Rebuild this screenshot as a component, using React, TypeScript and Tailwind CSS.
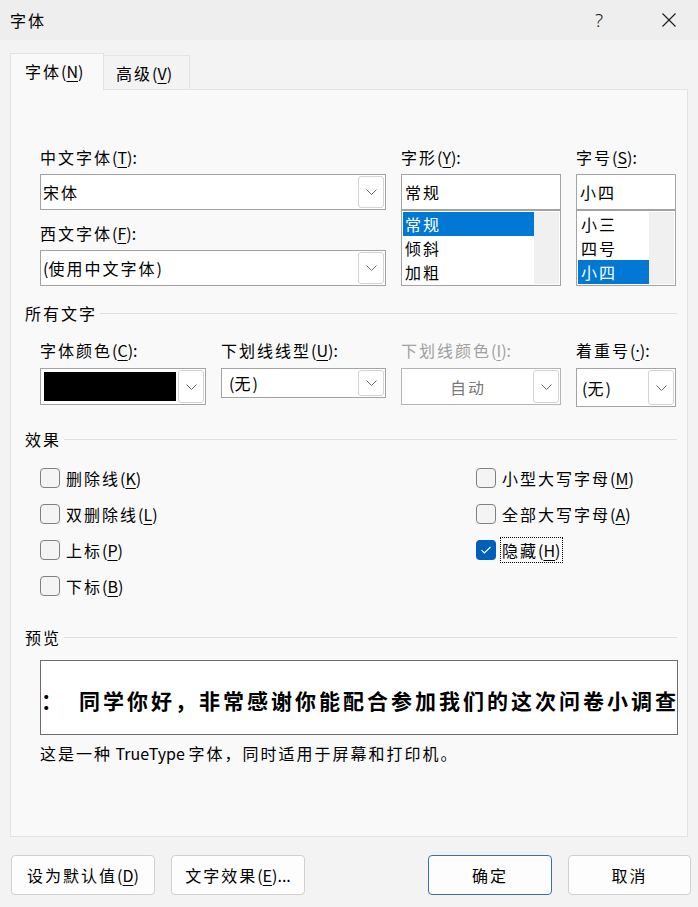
import React from "react";

const CJK = /[\u2E80-\u9FFF\uFF00-\uFFEF\u3000-\u303F]/;

function L({ s, uClass }: { s: string; uClass?: string }) {
  const out: React.ReactNode[] = [];
  let key = 0;
  let buf = "";
  let bufCjk: boolean | null = null;
  const flush = () => {
    if (buf) {
      out.push(
        <span key={key++} className={bufCjk ? "tracking-[2px]" : "tracking-normal"}>
          {buf}
        </span>
      );
      buf = "";
    }
  };
  let i = 0;
  while (i < s.length) {
    const ch = s[i];
    if (ch === "&") {
      flush();
      bufCjk = null;
      out.push(
        <span key={key++} className={"underline decoration-1 underline-offset-[3px] tracking-normal " + (uClass || "")}>
          {s[i + 1]}
        </span>
      );
      i += 2;
      continue;
    }
    const c = CJK.test(ch);
    if (bufCjk !== null && c !== bufCjk) flush();
    bufCjk = c;
    buf += ch;
    i++;
  }
  flush();
  return <>{out}</>;
}

const Chevron = () => (
  <svg width="11" height="6" viewBox="0 0 11 6" fill="none">
    <path d="M0.5 0.5L5.5 5.5L10.5 0.5" stroke="#6b6b6b" strokeWidth="1" />
  </svg>
);

function DropBtn() {
  return (
    <div className="w-[26px] shrink-0 self-stretch rounded-[3px] border border-[#d4d4d4] bg-white flex items-center justify-center">
      <Chevron />
    </div>
  );
}

function Section({ title }: { title: string }) {
  return (
    <div className="flex items-center h-[20px]">
      <span className="whitespace-nowrap">
        <L s={title} />
      </span>
      <div className="flex-1 h-px bg-[#e0e0e0] ml-[3px]" />
    </div>
  );
}

function Check({ label, checked, focus }: { label: string; checked?: boolean; focus?: boolean }) {
  return (
    <div className="h-[36px] flex items-center">
      {checked ? (
        <div className="w-[20px] h-[20px] rounded-[4px] bg-[#005fb8] flex items-center justify-center">
          <svg width="12" height="10" viewBox="0 0 12 10" fill="none">
            <path d="M1.5 5.2L4.4 8L10.5 2" stroke="white" strokeWidth="1.1" />
          </svg>
        </div>
      ) : (
        <div className="w-[20px] h-[20px] rounded-[4px] border border-[#7f7f7f] bg-[#f4f4f4]" />
      )}
      {focus ? (
        <span className="ml-[4px] h-[26px] flex items-center px-[1px] border border-dotted border-black whitespace-nowrap">
          <L s={label} />
        </span>
      ) : (
        <span className="ml-[6px] whitespace-nowrap">
          <L s={label} />
        </span>
      )}
    </div>
  );
}

function Btn({ s, className }: { s: string; className: string }) {
  return (
    <div className={"h-[40px] rounded-[4px] border bg-[#fdfdfd] flex items-center justify-center whitespace-nowrap " + className}>
      <L s={s} />
    </div>
  );
}

export default function App() {
  return (
    <div className="w-[698px] h-[907px] bg-[#f3f3f3] flex flex-col overflow-hidden text-black font-['Noto_Sans_CJK_SC','Noto_Sans',sans-serif] text-[16px] leading-[20px]">
      {/* title bar */}
      <div className="h-[40px] bg-[#eeeeee] flex items-center pl-[10px] pr-[6px] shrink-0">
        <span className="flex-1">
          <L s="字体" />
        </span>
        <div className="w-[46px] flex items-center justify-center text-[19px] font-light font-['Noto_Sans',sans-serif] text-[#1a1a1a]">?</div>
        <div className="ml-[24px] w-[46px] flex items-center justify-center">
          <svg width="14" height="14" viewBox="0 0 14 14" fill="none">
            <path d="M0.5 0.5L13.5 13.5M13.5 0.5L0.5 13.5" stroke="#1a1a1a" strokeWidth="1.1" />
          </svg>
        </div>
      </div>

      {/* tabs */}
      <div className="mt-[13px] h-[37px] flex items-end pl-[10px] relative z-10 shrink-0">
        <div className="w-[94px] h-[37px] border border-b-0 border-[#e3e3e3] bg-[#f9f9f9] flex items-center pl-[14px] pb-[2px] whitespace-nowrap">
          <L s="字体(&N)" />
        </div>
        <div className="w-[86px] h-[35px] border border-l-0 border-[#e3e3e3] bg-[#f3f3f3] flex items-center pl-[12px] whitespace-nowrap">
          <L s="高级(&V)" />
        </div>
      </div>

      {/* panel */}
      <div className="-mt-[1px] mx-[10px] h-[748px] shrink-0 border border-[#e3e3e3] bg-[#f9f9f9] pl-[14px] pr-[10px] flex flex-col">
        {/* row 1 */}
        <div className="mt-[57px] pl-[15px] grid grid-cols-[166px_165px_160px_100px] gap-x-[15px]">
          <div className="col-span-2 flex flex-col">
            <div className="h-[20px]">
              <L s="中文字体(&T):" />
            </div>
            <div className="mt-[7px] h-[36px] border border-[#a3a3a3] bg-white p-[1px] flex items-center">
              <span className="flex-1 pl-[1px]">
                <L s="宋体" />
              </span>
              <DropBtn />
            </div>
            <div className="mt-[13px] h-[20px]">
              <L s="西文字体(&F):" />
            </div>
            <div className="mt-[7px] h-[36px] border border-[#a3a3a3] bg-white p-[1px] flex items-center">
              <span className="flex-1 pl-[1px]">
                <L s="(使用中文字体)" />
              </span>
              <DropBtn />
            </div>
          </div>
          <div className="flex flex-col">
            <div className="h-[20px]">
              <L s="字形(&Y):" />
            </div>
            <div className="mt-[7px] h-[36px] border border-[#a3a3a3] bg-white flex items-center pl-[3px]">
              <L s="常规" />
            </div>
            <div className="h-[76px] border border-[#a3a3a3] bg-white p-[1px] flex">
              <div className="flex-1 flex flex-col">
                <div className="h-[24px] bg-[#0078d4] text-white flex items-center pl-[2px]">
                  <L s="常规" />
                </div>
                <div className="h-[24px] flex items-center pl-[2px]">
                  <L s="倾斜" />
                </div>
                <div className="h-[24px] flex items-center pl-[2px]">
                  <L s="加粗" />
                </div>
              </div>
              <div className="w-[25px] bg-[#f0f0f0]" />
            </div>
          </div>
          <div className="flex flex-col">
            <div className="h-[20px]">
              <L s="字号(&S):" />
            </div>
            <div className="mt-[7px] h-[36px] border border-[#a3a3a3] bg-white flex items-center pl-[3px]">
              <L s="小四" />
            </div>
            <div className="h-[76px] border border-[#a3a3a3] bg-white p-[1px] flex">
              <div className="flex-1 flex flex-col">
                <div className="h-[24px] flex items-center pl-[3px]">
                  <L s="小三" />
                </div>
                <div className="h-[24px] flex items-center pl-[3px]">
                  <L s="四号" />
                </div>
                <div className="h-[24px] bg-[#0078d4] text-white flex items-center pl-[3px]">
                  <L s="小四" />
                </div>
              </div>
              <div className="w-[25px] bg-[#f0f0f0]" />
            </div>
          </div>
        </div>

        {/* 所有文字 */}
        <div className="mt-[17px]">
          <Section title="所有文字" />
        </div>
        <div className="mt-[17px] pl-[15px] grid grid-cols-[166px_165px_160px_100px] gap-x-[15px] items-start">
          <div className="flex flex-col">
            <div className="h-[20px] whitespace-nowrap">
              <L s="字体颜色(&C):" />
            </div>
            <div className="mt-[8px] h-[37px] border border-[#a3a3a3] bg-white p-[1px] flex">
              <div className="flex-1 my-[2px] ml-[2px] mr-[2px] bg-black" />
              <DropBtn />
            </div>
          </div>
          <div className="flex flex-col">
            <div className="h-[20px] whitespace-nowrap">
              <L s="下划线线型(&U):" />
            </div>
            <div className="mt-[8px] h-[30px] border border-[#a3a3a3] bg-white p-[1px] flex items-center">
              <span className="flex-1 pl-[6px]">
                <L s="(无)" />
              </span>
              <DropBtn />
            </div>
          </div>
          <div className="flex flex-col">
            <div className="h-[20px] whitespace-nowrap text-[#a0a0a0]">
              <L s="下划线颜色(&I):" />
            </div>
            <div className="mt-[8px] h-[37px] border border-[#b4b4b4] bg-white p-[1px] flex items-center">
              <span className="flex-1 text-center text-[#7a7a7a]">
                <L s="自动" />
              </span>
              <DropBtn />
            </div>
          </div>
          <div className="flex flex-col">
            <div className="h-[20px] whitespace-nowrap">
              <L s="着重号(&·):" uClass="font-['Noto_Sans',sans-serif]" />
            </div>
            <div className="mt-[8px] h-[39px] border border-[#a3a3a3] bg-white p-[1px] flex items-center">
              <span className="flex-1 pl-[4px]">
                <L s="(无)" />
              </span>
              <DropBtn />
            </div>
          </div>
        </div>

        {/* 效果 */}
        <div className="mt-[22px]">
          <Section title="效果" />
        </div>
        <div className="mt-[11px] pl-[15px] grid grid-cols-[436px_1fr]">
          <div className="flex flex-col">
            <Check label="删除线(&K)" />
            <Check label="双删除线(&L)" />
            <Check label="上标(&P)" />
            <Check label="下标(&B)" />
          </div>
          <div className="flex flex-col">
            <Check label="小型大写字母(&M)" />
            <Check label="全部大写字母(&A)" />
            <Check label="隐藏(&H)" checked focus />
          </div>
        </div>

        {/* 预览 */}
        <div className="mt-[23px]">
          <Section title="预览" />
        </div>
        <div className="mt-[13px] ml-[15px] w-[638px] h-[75px] border border-[#6d6d6d] bg-white overflow-hidden flex items-center pt-[4px] whitespace-nowrap font-bold text-[21px] leading-[28px] tracking-[3px]">
          <span>：</span>
          <span className="ml-[14px]">同学你好，非常感谢你能配合参加我们的这次问卷小调查</span>
        </div>
        <div className="mt-[8px] ml-[15px] h-[20px] whitespace-nowrap">
          <L s="这是一种 TrueType 字体，同时适用于屏幕和打印机。" />
        </div>
      </div>

      {/* buttons */}
      <div className="mt-[18px] flex pl-[11px] pr-[7px] shrink-0">
        <Btn s="设为默认值(&D)" className="w-[144px] border-[#d0d0d0]" />
        <Btn s="文字效果(&E)..." className="ml-[16px] w-[134px] border-[#d0d0d0]" />
        <div className="flex-1" />
        <Btn s="确定" className="w-[124px] border-[#3a70ae]" />
        <Btn s="取消" className="ml-[16px] w-[123px] border-[#d0d0d0]" />
      </div>
    </div>
  );
}
